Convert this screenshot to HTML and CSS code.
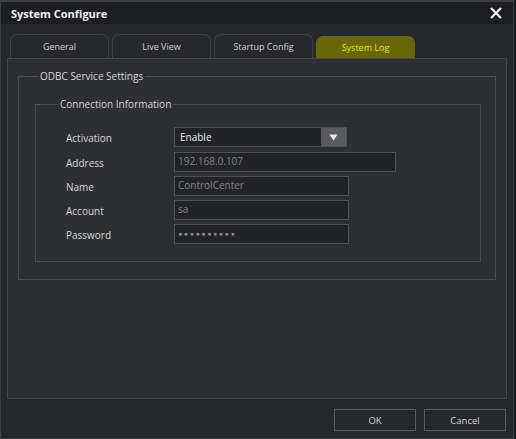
FILE: index.html
```html
<!DOCTYPE html>
<html lang="en">
<head>
    <meta charset="UTF-8">
    <meta name="viewport" content="width=device-width, initial-scale=1.0">
    <title>System Configure</title>
    <link rel="stylesheet" href="styles.css">
</head>
<body>
    <div class="window">
        <div class="titlebar">
            <span class="title">System Configure</span>
            <button class="close" type="button" aria-label="Close">
                <svg width="12" height="12" viewBox="0 0 12 12">
                    <path d="M1 1 L11 11 M11 1 L1 11" stroke="#f2f2f2" stroke-width="2.2" fill="none"/>
                </svg>
            </button>
        </div>

        <div class="tabs">
            <div class="tab">General</div>
            <div class="tab">Live View</div>
            <div class="tab">Startup Config</div>
            <div class="tab active">System Log</div>
        </div>

        <div class="panel">
            <fieldset class="group outer">
                <legend>ODBC Service Settings</legend>
                <fieldset class="group inner">
                    <legend>Connection Information</legend>
                    <div class="form-grid">
                        <label>Activation</label>
                        <div class="select">
                            <span class="select-value">Enable</span>
                            <span class="select-arrow">
                                <svg width="9" height="7" viewBox="0 0 9 7">
                                    <path d="M0.5 0.5 L8.5 0.5 L4.5 6.5 Z" fill="#e8e8e8"/>
                                </svg>
                            </span>
                        </div>

                        <label>Address</label>
                        <div class="field wide">192.168.0.107</div>

                        <label>Name</label>
                        <div class="field">ControlCenter</div>

                        <label>Account</label>
                        <div class="field">sa</div>

                        <label>Password</label>
                        <div class="field dots">●●●●●●●●●●</div>
                    </div>
                </fieldset>
            </fieldset>
        </div>

        <div class="footer">
            <button class="btn" type="button">OK</button>
            <button class="btn" type="button">Cancel</button>
        </div>
    </div>
</body>
</html>
```

FILE: styles.css
```css
body {
    margin: 0;
    background: #1b1c20;
    font-family: "Open Sans", "Noto Sans", sans-serif;
    font-size: 10px;
    color: #d8d8d8;
}
.window {
    width: 512px;
    height: 436px;
    background: #27282d;
    border: 1px solid #3d3e43;
    border-top-width: 2px;
    display: flex;
    flex-direction: column;
}
.titlebar {
    height: 22px;
    background: #1d1e23;
    display: flex;
    align-items: center;
    justify-content: space-between;
    padding: 0 10px 0 10px;
}
.title {
    font-weight: bold;
    font-size: 11px;
    color: #f0f0f0;
}
.close {
    background: none;
    border: none;
    padding: 0;
    width: 12px;
    height: 12px;
    display: flex;
    margin-right: 1px;
}
.tabs {
    display: flex;
    gap: 3px;
    margin-top: 10px;
    padding-left: 9px;
    height: 24px;
}
.tab {
    width: 97px;
    border: 1px solid #3f4045;
    border-bottom: none;
    border-radius: 7px 7px 0 0;
    display: flex;
    align-items: center;
    justify-content: center;
    color: #cfcfcf;
    font-size: 9px;
}
.tab.active {
    background: #67670a;
    border-color: #67670a;
    color: #e4e41c;
    margin-top: 2px;
}
.panel {
    margin: 0 6px;
    height: 329px;
    background: #2e2f34;
    border: 1px solid #46474c;
    padding: 10px 10px 0 10px;
}
.group {
    margin: 0;
    border: 1px solid #4a4b50;
    min-width: 0;
}
.group legend {
    padding: 0 2px;
    color: #d6d6d6;
    font-size: 10px;
}
.outer {
    padding: 14px 14px 17px 16px;
}
.outer > legend {
    margin-left: 3px;
}
.inner {
    padding: 16px 0 17px 30px;
}
.inner > legend {
    margin-left: -8px;
}
.form-grid {
    display: grid;
    grid-template-columns: 108px auto;
    row-gap: 4px;
    align-items: center;
    justify-items: start;
}
.form-grid label {
    color: #d6d6d6;
    padding-top: 1px;
}
.form-grid .select {
    margin-bottom: 1px;
}
.select {
    width: 173px;
    height: 20px;
    box-sizing: border-box;
    border: 1px solid #505156;
    background: #222328;
    display: flex;
}
.select-value {
    flex: 1;
    padding-left: 5px;
    line-height: 18px;
    color: #ececec;
}
.select-arrow {
    width: 25px;
    background: #5a5b60;
    display: flex;
    align-items: center;
    justify-content: center;
}
.field {
    width: 175px;
    height: 20px;
    box-sizing: border-box;
    border: 1px solid #505156;
    background: #222328;
    padding-left: 3px;
    line-height: 16px;
    color: #858585;
}
.field.wide {
    width: 222px;
}
.field.dots {
    font-size: 7px;
    letter-spacing: 1.6px;
    line-height: 18px;
    color: #8c8c8c;
}
.footer {
    display: flex;
    justify-content: flex-end;
    gap: 8px;
    padding: 10px 7px 0 0;
}
.btn {
    width: 82px;
    height: 22px;
    background: #26272c;
    border: 1px solid #5a5b60;
    color: #d4d4d4;
    font-family: "Open Sans", "Noto Sans", sans-serif;
    font-size: 9.5px;
    padding: 0;
}
```
